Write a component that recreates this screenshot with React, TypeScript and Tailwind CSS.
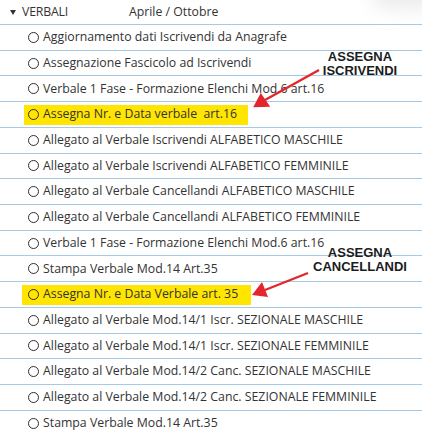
import React from "react";

type Row = { label: string; mark?: "w1" | "w2" };

const rows: Row[] = [
  { label: "Aggiornamento dati Iscrivendi da Anagrafe" },
  { label: "Assegnazione Fascicolo ad Iscrivendi" },
  { label: "Verbale 1 Fase - Formazione Elenchi Mod.6 art.16" },
  { label: "Assegna Nr. e Data verbale  art.16", mark: "w1" },
  { label: "Allegato al Verbale Iscrivendi ALFABETICO MASCHILE" },
  { label: "Allegato al Verbale Iscrivendi ALFABETICO FEMMINILE" },
  { label: "Allegato al Verbale Cancellandi ALFABETICO MASCHILE" },
  { label: "Allegato al Verbale Cancellandi ALFABETICO FEMMINILE" },
  { label: "Verbale 1 Fase - Formazione Elenchi Mod.6 art.16" },
  { label: "Stampa Verbale Mod.14 Art.35" },
  { label: "Assegna Nr. e Data Verbale art. 35", mark: "w2" },
  { label: "Allegato al Verbale Mod.14/1 Iscr. SEZIONALE MASCHILE" },
  { label: "Allegato al Verbale Mod.14/1 Iscr. SEZIONALE FEMMINILE" },
  { label: "Allegato al Verbale Mod.14/2 Canc. SEZIONALE MASCHILE" },
  { label: "Allegato al Verbale Mod.14/2 Canc. SEZIONALE FEMMINILE" },
  { label: "Stampa Verbale Mod.14 Art.35" },
];

const Radio = () => (
  <span className="w-[11px] h-[11px] rounded-full border-[1.4px] border-[#2e2e2e] shrink-0" />
);

const Callout = ({ lines, top }: { lines: string[]; top: string }) => (
  <div
    className={`absolute left-[290px] w-[140px] text-center font-bold text-[13px] leading-[14px] text-[#1c1c1c] ${top}`}
    style={{ fontFamily: '"Liberation Sans", Arial, sans-serif' }}
  >
    {lines.map((l) => (
      <div key={l}>{l}</div>
    ))}
  </div>
);

export default function App() {
  return (
    <div
      className="relative w-[422px] h-[435px] bg-white overflow-hidden text-[#333]"
      style={{ fontFamily: '"Open Sans", "Noto Sans", sans-serif' }}
    >
      <div className="absolute right-[-20px] top-[-22px] w-[70px] h-[30px] rounded-full bg-[#dcdcdc] blur-[10px] opacity-60" />

      <div className="relative flex items-center h-[25px] border-b border-[#a6c9e6] text-[12.3px]">
        <span className="ml-[10px] w-0 h-0 border-l-[3.5px] border-r-[3.5px] border-t-[5px] border-l-transparent border-r-transparent border-t-[#333]" />
        <span className="ml-[6px] tracking-[-0.2px]">VERBALI</span>
        <span className="ml-[61px]">Aprile / Ottobre</span>
      </div>

      {rows.map((r, i) => (
        <div
          key={i}
          className="flex items-center h-[25.73px] border-b border-[#a6c9e6] text-[12.3px]"
        >
          {r.mark ? (
            <span
              className={`flex items-center gap-[4px] h-[20px] bg-[#ffe500] whitespace-pre ${
                r.mark === "w1" ? "ml-[24px] w-[224px] pl-[4px]" : "ml-[22px] w-[229px] pl-[6px]"
              }`}
            >
              <Radio />
              {r.label}
            </span>
          ) : (
            <span className="flex items-center gap-[4px] ml-[28px] whitespace-pre">
              <Radio />
              {r.label}
            </span>
          )}
        </div>
      ))}

      <Callout lines={["ASSEGNA", "ISCRIVENDI"]} top="top-[50px]" />
      <Callout lines={["ASSEGNA", "CANCELLANDI"]} top="top-[246px]" />

      <svg className="absolute inset-0" width="422" height="435">
        <line x1="319" y1="70" x2="265" y2="100" stroke="#e3262b" strokeWidth="2.4" />
        <polygon points="253,107 261,93 270,107" fill="#e3262b" transform="rotate(-2 262 101)" />
        <line x1="308" y1="273" x2="265" y2="290" stroke="#e3262b" strokeWidth="2.4" />
        <polygon points="252,295 262,282 268,297" fill="#e3262b" />
      </svg>
    </div>
  );
}
